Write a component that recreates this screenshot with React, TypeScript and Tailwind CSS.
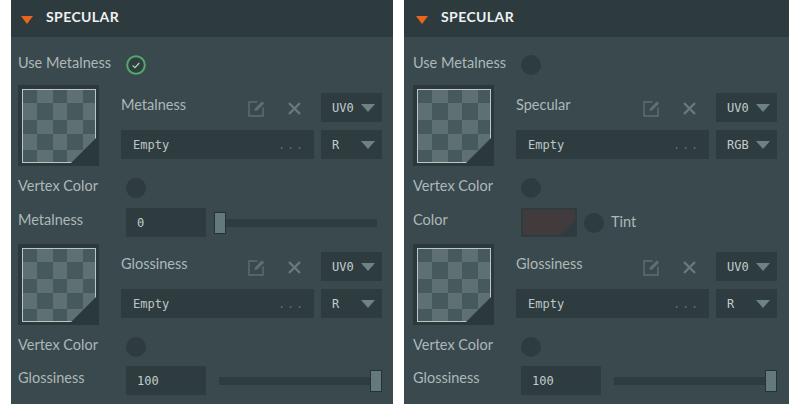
const sans = "font-['Lato',sans-serif]"
const mono = "font-['DejaVu_Sans_Mono',monospace]"

function Caret() {
  return (
    <svg width="14" height="8" viewBox="0 0 14 8" className="shrink-0">
      <path d="M0 0h14L7 8z" fill="#6d8285" />
    </svg>
  )
}

function Dropdown({ value }: { value: string }) {
  return (
    <div className={`${mono} flex h-[29px] w-[61px] shrink-0 items-center justify-between bg-[#2e3c40] pl-[11px] pr-[7px] text-[12px] text-[#c3cccc]`}>
      <span>{value}</span>
      <Caret />
    </div>
  )
}

function Radio({ checked = false }: { checked?: boolean }) {
  if (checked) {
    return (
      <svg width="20" height="20" viewBox="0 0 20 20" className="shrink-0">
        <circle cx="10" cy="10" r="8.8" fill="#2f3e41" stroke="#55a869" strokeWidth="2" />
        <path d="M6.6 10.4l2.3 2.2 4.4-4.6" fill="none" stroke="#9be3a6" strokeWidth="1.2" />
      </svg>
    )
  }
  return <div className="h-5 w-5 shrink-0 rounded-full bg-[#2e3c40]" />
}

function Checker() {
  const xs = [5, 19, 35, 49, 65, 77]
  const ys = [5, 18, 35, 49, 65, 77]
  const cells = []
  for (let r = 0; r < 5; r++) {
    for (let c = 0; c < 5; c++) {
      cells.push(
        <rect
          key={`${r}-${c}`}
          x={xs[c]}
          y={ys[r]}
          width={xs[c + 1] - xs[c]}
          height={ys[r + 1] - ys[r]}
          fill={(r + c) % 2 === 0 ? '#46595d' : '#5f7073'}
        />,
      )
    }
  }
  return (
    <svg width="81" height="81" viewBox="0 0 81 81" className="shrink-0 bg-[#2b383c]">
      {cells}
      <rect x="4.5" y="4.500" width="73" height="73" fill="none" stroke="#bcc6c5" strokeWidth="1" />
      <path d="M81 50V81H50z" fill="#2b383c" />
    </svg>
  )
}

function TextureBlock({ label, channel, topMargin }: { label: string; channel: string; topMargin: string }) {
  return (
    <div className={`flex h-[80px] ${topMargin}`}>
      <Checker />
      <div className="ml-[22px] flex w-[261px] flex-col gap-2 pt-2">
        <div className="flex h-[29px] items-center">
          <span className="-mt-[6px] flex-1 text-[14.5px] text-[#adb8b9]">{label}</span>
          <svg width="17" height="18" viewBox="0 0 17 18" className="mr-[23px] shrink-0">
            <path d="M9.5 3H1v14h14V8.500" fill="none" stroke="#5f6e71" strokeWidth="1.4" />
            <path d="M6.500 12l.6-2.800L14 2.200l2.200 2.200-7 7z" fill="#5f6e71" />
          </svg>
          <svg width="13" height="13" viewBox="0 0 13 13" className="mr-[20px] mt-[2px] shrink-0">
            <path d="M1 1l11 11M12 1L1 12" stroke="#6b787a" strokeWidth="2.4" />
          </svg>
          <Dropdown value="UV0" />
        </div>
        <div className="flex h-[29px] gap-[7px]">
          <div className={`${mono} flex flex-1 items-center justify-between bg-[#2e3c40] pl-[12px] pr-[9px] text-[12px] text-[#bcc6c6]`}>
            <span>Empty</span>
            <span className="tracking-[1.8px] text-[#5f6e71]">...</span>
          </div>
          <Dropdown value={channel} />
        </div>
      </div>
    </div>
  )
}

function ToggleRow({ label, checked, topMargin }: { label: string; checked?: boolean; topMargin: string }) {
  return (
    <div className={`flex h-[22px] items-center ${topMargin}`}>
      <span className="-mt-[5px] w-[108px] shrink-0 whitespace-nowrap text-[14.5px] text-[#adb8b9]">{label}</span>
      <Radio checked={checked} />
    </div>
  )
}

function NumberInput({ value }: { value: string }) {
  return (
    <div className={`${mono} flex h-[29px] w-[80px] shrink-0 items-center bg-[#2e3c40] pl-[11px] text-[12px] text-[#c3cccc]`}>
      {value}
    </div>
  )
}

function SliderThumb() {
  return <div className="h-[22px] w-[12px] shrink-0 border border-[#263236] bg-[#64797c]" />
}

function ValueRow({ label, children, topMargin }: { label: string; children: React.ReactNode; topMargin: string }) {
  return (
    <div className={`flex h-[29px] items-center ${topMargin}`}>
      <span className="-mt-[5px] w-[108px] shrink-0 text-[14.5px] text-[#adb8b9]">{label}</span>
      {children}
    </div>
  )
}

function Panel({ specular }: { specular?: boolean }) {
  return (
    <div className={`${sans} h-[404px] shrink-0 bg-[#3a494d] ${specular ? 'w-[385px]' : 'w-[382px]'}`}>
      <div className={`flex h-[37px] items-center bg-[#2d3b3f] ${specular ? 'pl-[12px]' : 'pl-[10px]'}`}>
        <svg width="12" height="8" viewBox="0 0 12 8" className="mt-[2px]">
          <path d="M0 0h12L6 8z" fill="#e8661c" />
        </svg>
        <span className="ml-[13px] -mt-[4px] text-[14px] font-bold tracking-[0.4px] text-[#eef1f1]">SPECULAR</span>
      </div>
      <div className={specular ? 'pl-[9px]' : 'pl-[7px]'}>
        <ToggleRow label="Use Metalness" checked={!specular} topMargin="mt-[17px]" />
        <TextureBlock label={specular ? 'Specular' : 'Metalness'} channel={specular ? 'RGB' : 'R'} topMargin="mt-[9px]" />
        <ToggleRow label="Vertex Color" topMargin="mt-[12px]" />
        {specular ? (
          <ValueRow label="Color" topMargin="mt-[9px]">
            <svg width="56" height="29" viewBox="0 0 56 29" className="shrink-0 bg-[#2e3c40]">
              <path d="M2 2h52v10.500L39 27H2z" fill="#413b3d" />
            </svg>
            <div className="ml-[7px]">
              <Radio />
            </div>
            <span className="ml-[7px] -mt-[1px] text-[14.5px] text-[#adb8b9]">Tint</span>
          </ValueRow>
        ) : (
          <ValueRow label="Metalness" topMargin="mt-[9px]">
            <NumberInput value="0" />
            <div className="ml-[8px] flex w-[163px] items-center">
              <SliderThumb />
              <div className="h-[8px] flex-1 bg-[#2e3c40]" />
            </div>
          </ValueRow>
        )}
        <TextureBlock label="Glossiness" channel="R" topMargin="mt-[7px]" />
        <ToggleRow label="Vertex Color" topMargin="mt-[12px]" />
        <ValueRow label="Glossiness" topMargin="mt-[8px]">
          <NumberInput value="100" />
          <div className="ml-[13px] flex w-[163px] items-center">
            <div className="h-[8px] flex-1 bg-[#2e3c40]" />
            <SliderThumb />
          </div>
        </ValueRow>
      </div>
    </div>
  )
}

export default function App() {
  return (
    <div className="flex h-[404px] w-[800px] gap-[11px] overflow-hidden bg-white pl-[11px]">
      <Panel />
      <Panel specular />
    </div>
  )
}
